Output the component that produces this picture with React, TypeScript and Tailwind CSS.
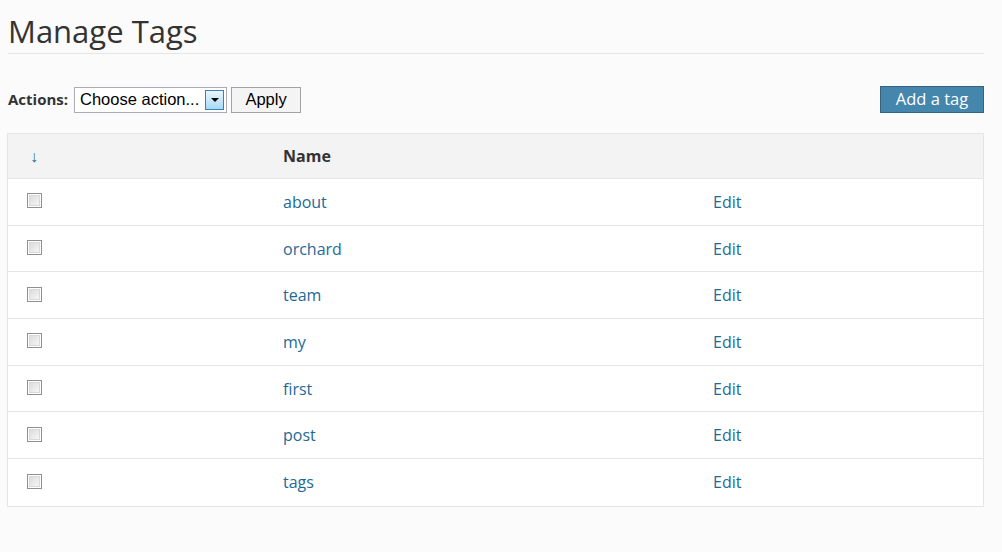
import React from 'react'

const tags = ['about', 'orchard', 'team', 'my', 'first', 'post', 'tags']

function Checkbox() {
  return (
    <span className="inline-block w-[15px] h-[15px] border border-[#8e8f8f] p-[1px] bg-white">
      <span className="block w-full h-full border border-[#d9d9d9] bg-gradient-to-br from-[#dcdcdc] to-[#f6f6f6]" />
    </span>
  )
}

export default function App() {
  return (
    <div className="min-h-[552px] bg-[#fbfbfb] text-[#333] font-['Open_Sans',sans-serif] px-2 pt-[10px]">
      <h1 className="text-[31px] leading-[42px] font-normal text-[#333] border-b border-[#e6e6e6] pb-[1px] mr-[10px]">
        Manage Tags
      </h1>

      <div className="flex items-center mt-[32px] mr-[10px]">
        <span className="text-[15px] font-bold text-[#333] mr-[6px]">Actions:</span>
        <div className="relative w-[153px] h-[26px] border border-[#abadb3] bg-white flex items-center font-['Liberation_Sans',Arial,sans-serif] text-[16.5px] text-black pl-[5px]">
          Choose action...
          <span className="absolute right-[2px] top-[2px] w-[19px] h-[20px] border border-[#3c7fb1] bg-gradient-to-b from-[#eaf6fd] to-[#a7d9f5] flex items-center justify-center">
            <span className="w-0 h-0 border-l-[4px] border-r-[4px] border-t-[4px] border-l-transparent border-r-transparent border-t-black" />
          </span>
        </div>
        <button className="ml-[4px] w-[70px] h-[26px] border border-[#a2a2a2] bg-[#f4f4f4] font-['Liberation_Sans',Arial,sans-serif] text-[16.5px] text-black flex items-center justify-center">
          Apply
        </button>
        <button className="ml-auto w-[104px] h-[27px] border border-[#36627f] bg-[#4586ad] text-white text-[16.5px] flex items-center justify-center">
          Add a tag
        </button>
      </div>

      <div className="mt-[20px] -ml-[1px] mr-[10px] border border-[#e5e5e5] bg-white">
        <div className="grid grid-cols-[256px_430px_1fr] h-[45px] items-center bg-[#f3f3f3] border-b border-[#e5e5e5]">
          <span className="pl-[22px] text-[#1f6f9a] text-[16px] leading-none">↓</span>
          <span className="pl-[19px] font-bold text-[16px] text-[#333]">Name</span>
          <span />
        </div>
        {tags.map((tag, i) => (
          <div
            key={tag}
            className={`grid grid-cols-[256px_430px_1fr] h-[46.7px] items-center ${i < tags.length - 1 ? 'border-b border-[#e5e5e5]' : ''}`}
          >
            <span className="pl-[19px] flex items-center -mt-[2px]">
              <Checkbox />
            </span>
            <span className="pl-[19px] text-[16px] text-[#1e6a97]">{tag}</span>
            <span className="pl-[19px] text-[16px] text-[#1e6a97]">Edit</span>
          </div>
        ))}
      </div>
    </div>
  )
}
